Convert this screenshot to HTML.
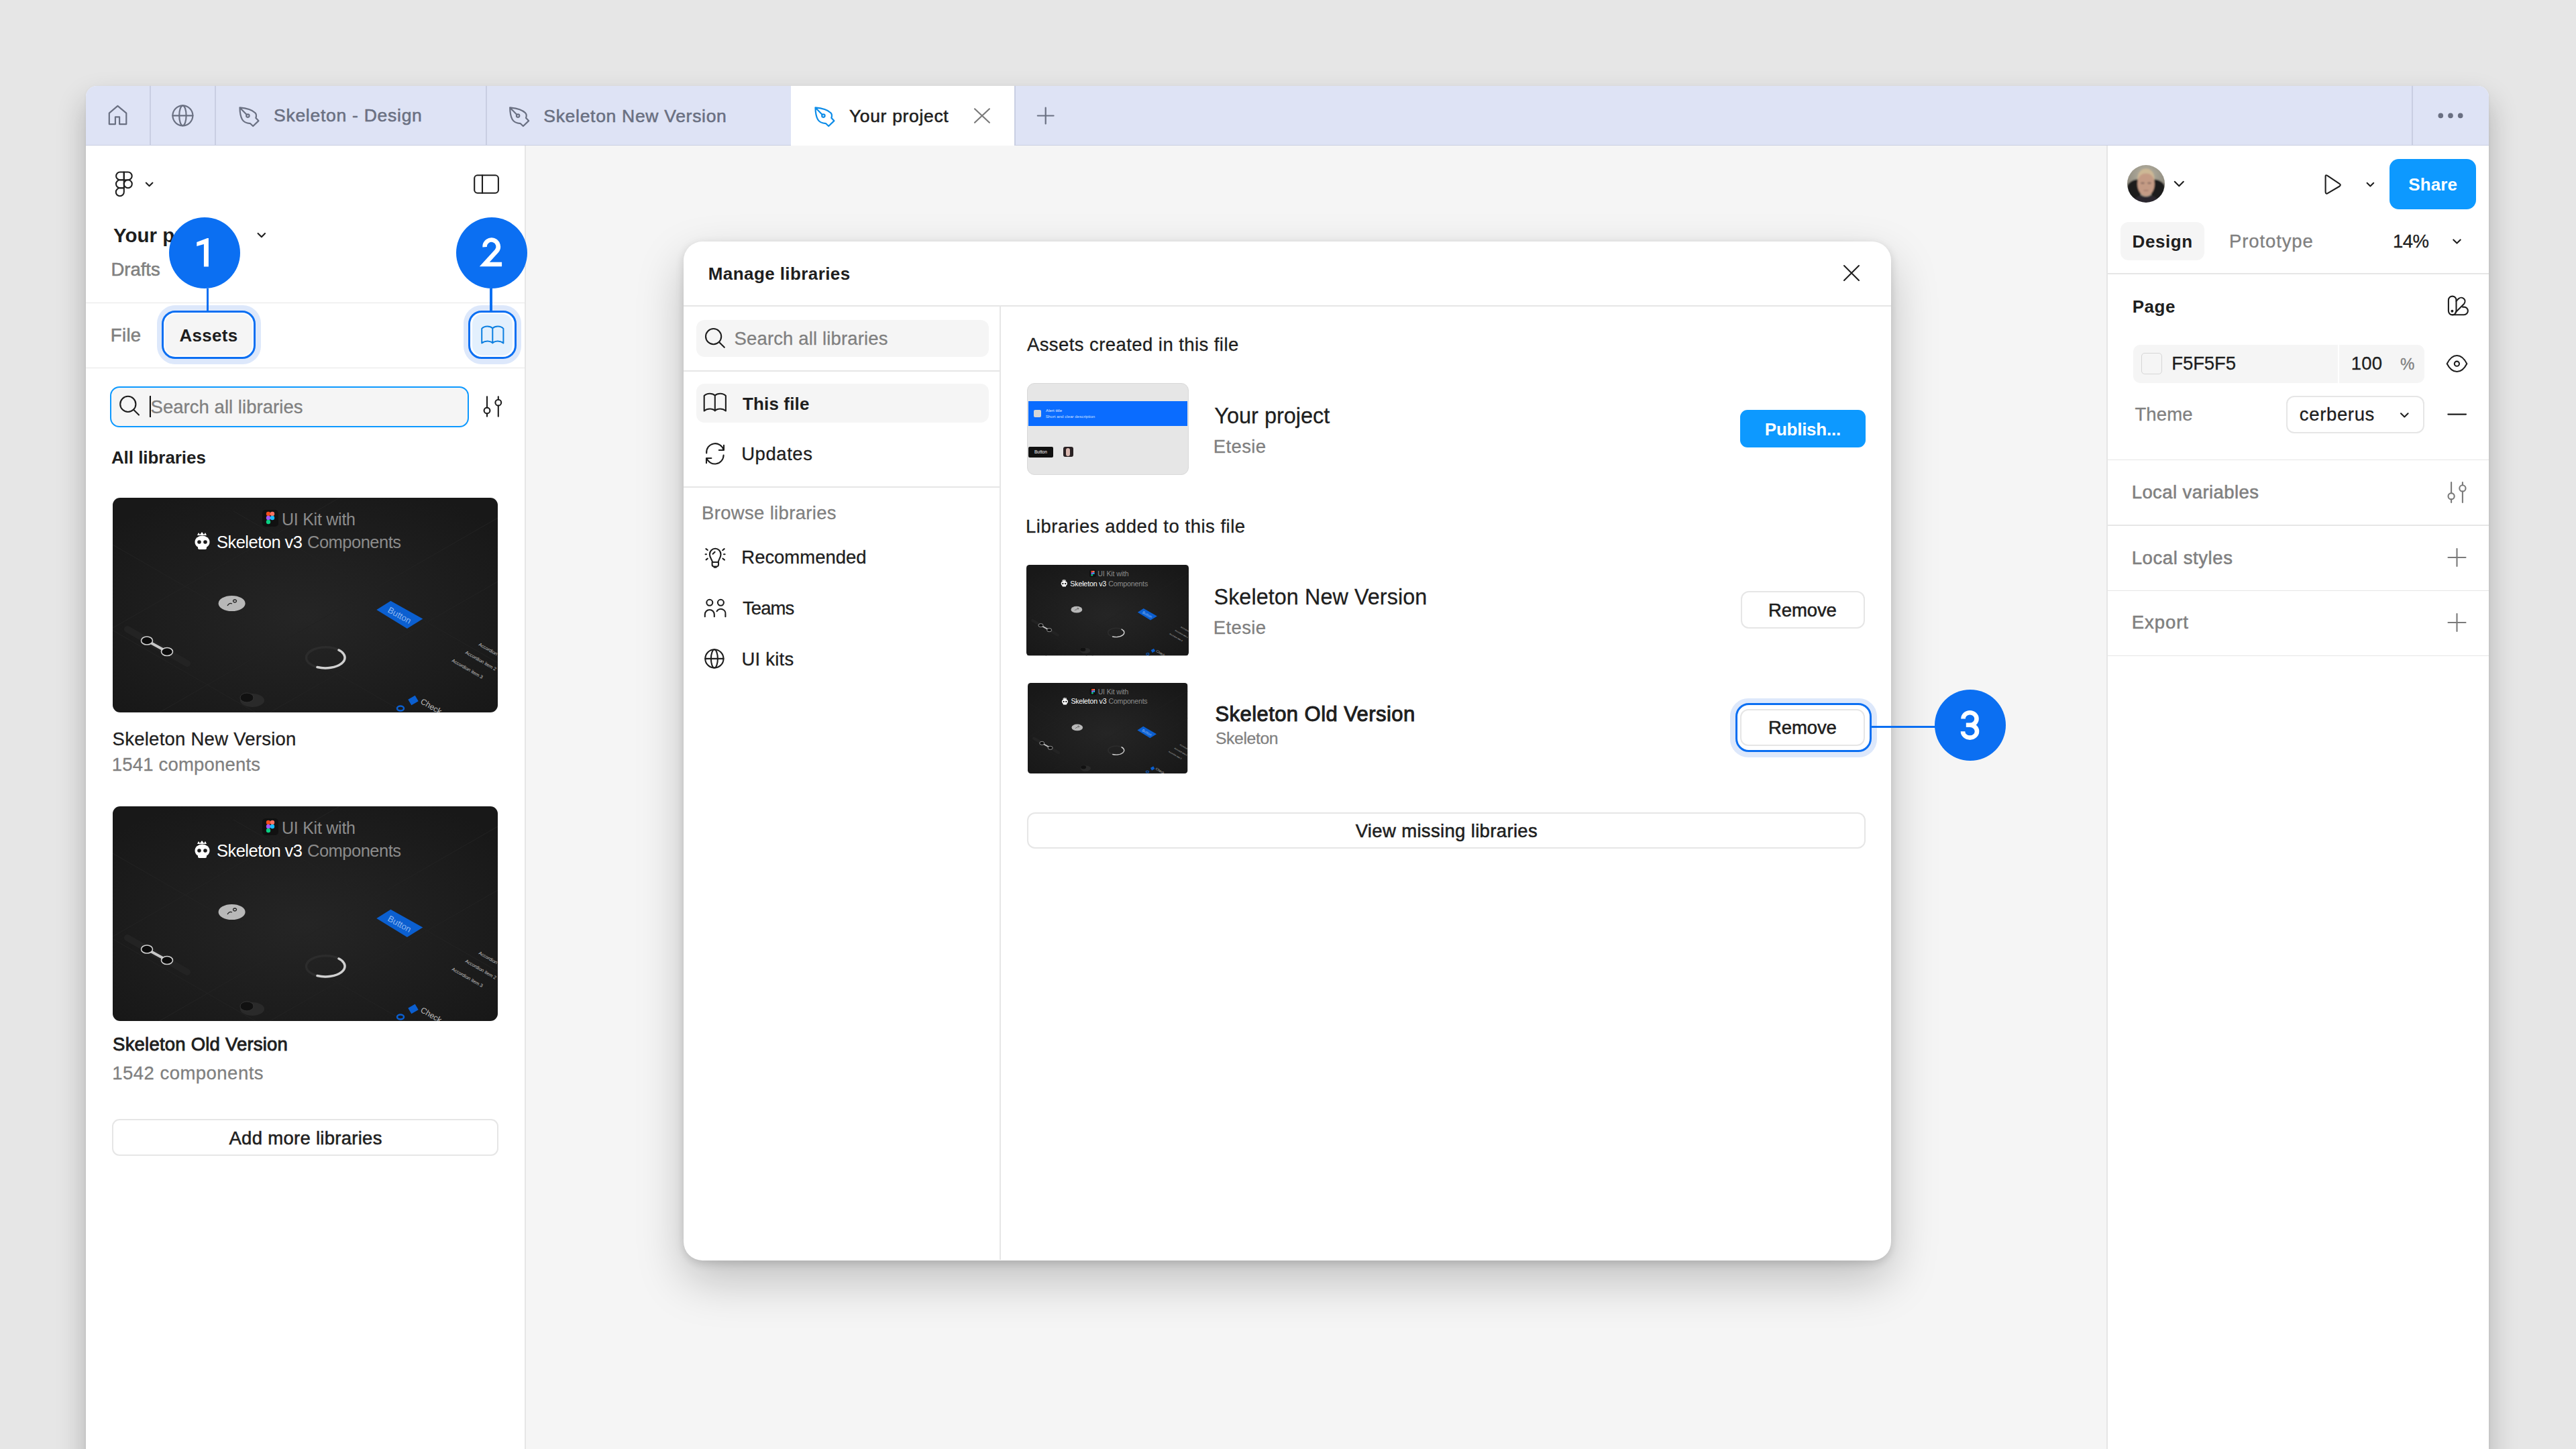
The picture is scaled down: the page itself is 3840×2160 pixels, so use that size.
<!DOCTYPE html>
<html><head><meta charset="utf-8"><style>
html,body{margin:0;padding:0;}
body{width:3840px;height:2160px;overflow:hidden;position:relative;background:#e6e6e6;font-family:"Liberation Sans",sans-serif;}
.t{position:absolute;white-space:nowrap;line-height:0;}
svg{position:absolute;overflow:visible;}
</style></head><body>

<div style="position:absolute;left:128px;top:128px;width:3582px;height:2100px;border-radius:16px;background:#fff;box-shadow:0 22px 44px rgba(0,0,0,0.24), 0 1px 4px rgba(0,0,0,0.06);overflow:hidden">
</div>
<div style="position:absolute;left:128.0px;top:128.0px;width:3582.0px;height:89.0px;background:#dee3f5;border-radius:16px 16px 0 0;"></div>
<div style="position:absolute;left:128.0px;top:216.0px;width:3582.0px;height:1.0px;background:#c9cee2;"></div>
<div style="position:absolute;left:223.0px;top:128.0px;width:1.5px;height:89.0px;background:#c9cee2;"></div>
<div style="position:absolute;left:320.0px;top:128.0px;width:1.5px;height:89.0px;background:#c9cee2;"></div>
<div style="position:absolute;left:724.0px;top:128.0px;width:1.5px;height:89.0px;background:#c9cee2;"></div>
<div style="position:absolute;left:3595.0px;top:128.0px;width:1.5px;height:89.0px;background:#c9cee2;"></div>
<div style="position:absolute;left:1179.0px;top:128.0px;width:333.0px;height:89.0px;background:#ffffff;"></div>
<div style="position:absolute;left:1512.0px;top:128.0px;width:1.5px;height:89.0px;background:#c9cee2;"></div>
<div style="position:absolute;left:783.0px;top:217.0px;width:2358.0px;height:1943.0px;background:#f5f5f5;"></div>
<div style="position:absolute;left:782.0px;top:217.0px;width:1.5px;height:1943.0px;background:#e6e6e6;"></div>
<div style="position:absolute;left:3140.0px;top:217.0px;width:1.5px;height:1943.0px;background:#e6e6e6;"></div>
<div class="t" style="left:408.0px;top:172.4px;font-size:26.50px;font-weight:400;color:#6a7082;letter-spacing:0.73px;-webkit-text-stroke:0.55px #6a7082;">Skeleton - Design</div>
<div class="t" style="left:810.3px;top:172.6px;font-size:26.50px;font-weight:400;color:#6a7082;letter-spacing:0.70px;-webkit-text-stroke:0.55px #6a7082;">Skeleton New Version</div>
<div class="t" style="left:1265.9px;top:172.6px;font-size:26.50px;font-weight:400;color:#1e1e1e;letter-spacing:0.67px;-webkit-text-stroke:0.55px #1e1e1e;">Your project</div>
<div class="t" style="left:169.0px;top:350.8px;font-size:29.50px;font-weight:700;color:#1e1e1e;letter-spacing:0.00px;">Your project</div>
<div class="t" style="left:165.4px;top:402.2px;font-size:27.50px;font-weight:400;color:#808080;letter-spacing:0.00px;-webkit-text-stroke:0.55px #808080;">Drafts</div>
<div style="position:absolute;left:128.0px;top:450.5px;width:654.0px;height:1.5px;background:#e6e6e6;"></div>
<div class="t" style="left:164.7px;top:499.5px;font-size:27.50px;font-weight:400;color:#808080;letter-spacing:0.39px;-webkit-text-stroke:0.55px #808080;">File</div>
<div style="position:absolute;left:233.5px;top:455.0px;width:155.0px;height:88.0px;background:#dde8fb;border-radius:27px;"></div>
<div style="position:absolute;left:240.6px;top:462.6px;width:140.4px;height:72.4px;background:#fff;border:3.4px solid #0b6ff2;border-radius:20px;box-sizing:border-box;"></div>
<div style="position:absolute;left:245.5px;top:467.5px;width:130.5px;height:62.5px;background:#f5f5f5;border-radius:15px;"></div>
<div class="t" style="left:267.4px;top:500.0px;font-size:26.00px;font-weight:700;color:#1e1e1e;letter-spacing:0.29px;">Assets</div>
<div style="position:absolute;left:691.0px;top:455.0px;width:85.5px;height:88.0px;background:#dde8fb;border-radius:27px;"></div>
<div style="position:absolute;left:698.0px;top:462.6px;width:71.5px;height:72.9px;background:#fff;border:3.4px solid #0b6ff2;border-radius:20px;box-sizing:border-box;"></div>
<div style="position:absolute;left:703.5px;top:468.0px;width:60.5px;height:62.0px;background:#e3f0fd;border-radius:15px;"></div>
<div style="position:absolute;left:128.0px;top:547.5px;width:654.0px;height:1.5px;background:#e6e6e6;"></div>
<div style="position:absolute;left:164.0px;top:575.7px;width:534.5px;height:60.9px;background:#f5f5f5;border:2.5px solid #0d99ff;border-radius:14px;box-sizing:border-box;"></div>
<div class="t" style="left:224.5px;top:606.5px;font-size:27.50px;font-weight:400;color:#808080;letter-spacing:0.04px;-webkit-text-stroke:0.3px #808080;">Search all libraries</div>
<div style="position:absolute;left:222.6px;top:590.0px;width:2.4px;height:32.0px;background:#1e1e1e;"></div>
<div class="t" style="left:165.9px;top:681.6px;font-size:26.00px;font-weight:700;color:#1e1e1e;letter-spacing:-0.05px;">All libraries</div>
<svg style="left:168px;top:742px" width="574" height="320" viewBox="0 0 574 320"><use href="#thumb"/></svg>
<div class="t" style="left:167.6px;top:1101.5px;font-size:27.50px;font-weight:400;color:#1e1e1e;letter-spacing:0.25px;-webkit-text-stroke:0.3px #1e1e1e;">Skeleton New Version</div>
<div class="t" style="left:166.7px;top:1139.5px;font-size:27.50px;font-weight:400;color:#808080;letter-spacing:0.19px;-webkit-text-stroke:0.3px #808080;">1541 components</div>
<svg style="left:168px;top:1202px" width="574" height="320" viewBox="0 0 574 320"><use href="#thumb"/></svg>
<div class="t" style="left:168.1px;top:1556.5px;font-size:27.50px;font-weight:400;color:#1e1e1e;letter-spacing:0.21px;-webkit-text-stroke:0.3px #1e1e1e;-webkit-text-stroke:0.9px #1e1e1e;">Skeleton Old Version</div>
<div class="t" style="left:167.2px;top:1599.5px;font-size:27.50px;font-weight:400;color:#808080;letter-spacing:0.48px;-webkit-text-stroke:0.3px #808080;">1542 components</div>
<div style="position:absolute;left:166.6px;top:1668.0px;width:576.4px;height:55.0px;border:2px solid #e6e6e6;border-radius:11px;box-sizing:border-box;"></div>
<div class="t" style="left:341.5px;top:1696.5px;font-size:27.50px;font-weight:400;color:#1e1e1e;letter-spacing:0.28px;-webkit-text-stroke:0.55px #1e1e1e;">Add more libraries</div>
<svg style="left:3170.8px;top:246.4px" width="56" height="56" viewBox="0 0 56 56"><defs><filter id="avblur" x="-10%" y="-10%" width="120%" height="120%"><feGaussianBlur stdDeviation="1"/></filter><clipPath id="avc"><circle cx="28" cy="28" r="28"/></clipPath><radialGradient id="avbg" cx="50%" cy="30%" r="70%"><stop offset="0" stop-color="#b8b3a3"/><stop offset="1" stop-color="#7d7a70"/></radialGradient></defs>
<g clip-path="url(#avc)"><g filter="url(#avblur)"><rect x="-4" y="-4" width="64" height="64" fill="url(#avbg)"/>
<path d="M0 31 C3 25 9 21 20 21 L20 48 L36 48 L36 21 C47 21 53 25 56 31 V56 H0 Z" fill="#1b1b1d"/>
<ellipse cx="28" cy="28" rx="12.8" ry="18.5" fill="#c49b85"/>
<path d="M15.2 24 C14.5 12 20.5 5.5 28 5.5 C35.5 5.5 41.5 12 40.8 24 C38.5 15.5 34 12.5 28 12.5 C22 12.5 17.5 15.5 15.2 24 Z" fill="#cdb895"/>
<ellipse cx="23" cy="27" rx="3" ry="1.4" fill="#6e5550" opacity="0.55"/><ellipse cx="33" cy="27" rx="3" ry="1.4" fill="#6e5550" opacity="0.55"/>
<ellipse cx="28" cy="38" rx="4" ry="1.3" fill="#9a6f62" opacity="0.5"/>
<path d="M6 60 C9 49 16 46 21 45 C24 48 32 48 35 45 C40 46 47 49 50 60 Z" fill="#2a282d"/>
</g></g></svg>
<div style="position:absolute;left:3562.0px;top:237.0px;width:129.0px;height:75.0px;background:#0d99ff;border-radius:14px;"></div>
<div class="t" style="left:3590.2px;top:275.2px;font-size:26.00px;font-weight:700;color:#ffffff;letter-spacing:0.12px;">Share</div>
<div style="position:absolute;left:3161.0px;top:331.0px;width:125.0px;height:57.0px;background:#f5f5f5;border-radius:12px;"></div>
<div class="t" style="left:3178.6px;top:360.0px;font-size:26.00px;font-weight:700;color:#1e1e1e;letter-spacing:0.55px;">Design</div>
<div class="t" style="left:3323.1px;top:359.5px;font-size:27.50px;font-weight:400;color:#808080;letter-spacing:0.88px;-webkit-text-stroke:0.3px #808080;">Prototype</div>
<div class="t" style="left:3566.9px;top:359.5px;font-size:27.50px;font-weight:400;color:#1e1e1e;letter-spacing:-0.48px;-webkit-text-stroke:0.3px #1e1e1e;">14%</div>
<div style="position:absolute;left:3141.0px;top:407.0px;width:569.0px;height:1.5px;background:#e6e6e6;"></div>
<div class="t" style="left:3178.7px;top:457.4px;font-size:26.00px;font-weight:700;color:#1e1e1e;letter-spacing:0.53px;">Page</div>
<div style="position:absolute;left:3180.0px;top:513.8px;width:434.4px;height:56.8px;background:#f5f5f5;border-radius:10px;"></div>
<div style="position:absolute;left:3485.0px;top:513.8px;width:2.0px;height:56.8px;background:#ffffff;"></div>
<div style="position:absolute;left:3191.8px;top:526.0px;width:31.2px;height:32.0px;background:#f5f5f5;border:1.5px solid #d6d6d6;border-radius:5px;box-sizing:border-box;"></div>
<div class="t" style="left:3237.2px;top:541.5px;font-size:27.50px;font-weight:400;color:#1e1e1e;letter-spacing:-0.07px;-webkit-text-stroke:0.3px #1e1e1e;">F5F5F5</div>
<div class="t" style="left:3504.7px;top:541.5px;font-size:27.50px;font-weight:400;color:#1e1e1e;letter-spacing:0.24px;-webkit-text-stroke:0.3px #1e1e1e;">100</div>
<div class="t" style="left:3578.1px;top:542.7px;font-size:24.00px;font-weight:400;color:#808080;letter-spacing:0.00px;-webkit-text-stroke:0.3px #808080;">%</div>
<div class="t" style="left:3182.4px;top:617.9px;font-size:27.50px;font-weight:400;color:#808080;letter-spacing:0.16px;-webkit-text-stroke:0.3px #808080;">Theme</div>
<div style="position:absolute;left:3407.6px;top:590.0px;width:206.1px;height:55.5px;border:2px solid #e6e6e6;border-radius:12px;box-sizing:border-box;"></div>
<div class="t" style="left:3427.8px;top:617.5px;font-size:27.50px;font-weight:400;color:#1e1e1e;letter-spacing:0.65px;-webkit-text-stroke:0.3px #1e1e1e;">cerberus</div>
<div style="position:absolute;left:3141.0px;top:684.5px;width:569.0px;height:1.5px;background:#e6e6e6;"></div>
<div class="t" style="left:3177.7px;top:734.2px;font-size:27.50px;font-weight:400;color:#808080;letter-spacing:0.42px;-webkit-text-stroke:0.55px #808080;">Local variables</div>
<div style="position:absolute;left:3141.0px;top:782.0px;width:569.0px;height:1.5px;background:#e6e6e6;"></div>
<div class="t" style="left:3177.7px;top:831.5px;font-size:27.50px;font-weight:400;color:#808080;letter-spacing:0.60px;-webkit-text-stroke:0.55px #808080;">Local styles</div>
<div style="position:absolute;left:3141.0px;top:879.5px;width:569.0px;height:1.5px;background:#e6e6e6;"></div>
<div class="t" style="left:3177.7px;top:928.2px;font-size:27.50px;font-weight:400;color:#808080;letter-spacing:0.94px;-webkit-text-stroke:0.55px #808080;">Export</div>
<div style="position:absolute;left:3141.0px;top:976.5px;width:569.0px;height:1.5px;background:#e6e6e6;"></div>
<svg style="left:0;top:0" width="3840" height="2160" viewBox="0 0 3840 2160" fill="none" stroke-linecap="round" stroke-linejoin="round">
<g stroke="#6a7082" stroke-width="2.2">
<path d="M162.8 185.1 V168.6 L175.4 157.8 L188.3 168.6 V185.1 H178.1 V174.3 H171.9 V185.1 Z"/>
<circle cx="272.4" cy="172.3" r="15"/>
<ellipse cx="272.4" cy="172.3" rx="5.2" ry="15"/>
<path d="M257.4 172.3 H287.4"/>
<path d="M357.5 160.4 C367.0 161.2 376.0 164.0 380.4 168.2 C382.5 170.5 382.0 174.0 381.3 175.8 L385.4 180.1 L377.2 188.0 L373.2 184.2 C368.0 183.8 363.0 181.5 361.0 178.0 C358.8 174.0 357.6 167.0 357.5 160.4 Z M357.5 160.4 L367.8 171.0"/>
<circle cx="369.4" cy="172.6" r="2.2"/>
<path d="M760.2 160.4 C769.7 161.2 778.7 164.0 783.1 168.2 C785.2 170.5 784.7 174.0 784.0 175.8 L788.1 180.1 L779.9 188.0 L775.9 184.2 C770.7 183.8 765.7 181.5 763.7 178.0 C761.5 174.0 760.3 167.0 760.2 160.4 Z M760.2 160.4 L770.5 171.0"/>
<circle cx="772.1" cy="172.6" r="2.2"/>
<path d="M1546.8 172.5 H1570.6 M1558.7 160.6 V184.5"/>
</g>
<g stroke="#0d8ce8" stroke-width="2.2">
<path d="M1215.5 160.4 C1225.0 161.2 1234.0 164.0 1238.4 168.2 C1240.5 170.5 1240.0 174.0 1239.3 175.8 L1243.4 180.1 L1235.2 188.0 L1231.2 184.2 C1226.0 183.8 1221.0 181.5 1219.0 178.0 C1216.8 174.0 1215.6 167.0 1215.5 160.4 Z M1215.5 160.4 L1225.8 171.0"/>
<circle cx="1227.4" cy="172.6" r="2.2"/>
</g>
<path d="M1453 162.3 L1474.9 182.7 M1474.9 162.3 L1453 182.7" stroke="#7a7a7a" stroke-width="2.2"/>
<g fill="#6a7082"><circle cx="3638.3" cy="172.4" r="3.8"/><circle cx="3653" cy="172.4" r="3.8"/><circle cx="3667.7" cy="172.4" r="3.8"/></g>
<g stroke="#1e1e1e" stroke-width="2.1">
<path d="M184.8 256.5 H179 A5.9 5.9 0 0 0 179 268.3 H184.8 Z"/>
<path d="M184.8 256.5 H190.8 A5.9 5.9 0 0 1 190.8 268.3 H184.8 Z"/>
<path d="M184.8 268.3 H179 A6 6 0 0 0 179 280.3 H184.8 Z"/>
<circle cx="190.8" cy="274.3" r="6"/>
<path d="M184.8 280.3 H179 A6 6 0 1 0 184.8 286.3 Z"/>
<path d="M217.8 272.6 L222.6 277.2 L227.4 272.6"/>
<rect x="707.2" y="261.3" width="35.7" height="26.4" rx="4.5"/>
<path d="M719 261.3 V287.7"/>
<path d="M384.6 347.9 L389.9 353.2 L395 347.9"/>
<circle cx="190.8" cy="602.4" r="11.6"/>
<path d="M199.4 611 L207 618.6"/>
<path d="M726 591.3 V607.6 M726 616.4 V620.8 M742.8 591.3 V595.8 M742.8 604.6 V620.8"/>
<circle cx="726" cy="612" r="4.4"/>
<circle cx="742.8" cy="600.2" r="4.4"/>
<path d="M3241.8 270.8 L3248.3 277.3 L3254.8 270.8"/>
<path d="M3466.6 262.5 V285.8 Q3466.6 290 3470.2 287.9 L3487 278 Q3490.6 275.8 3487 273.6 L3470.2 262.3 Q3466.6 260.2 3466.6 262.5 Z"/>
<path d="M3528.6 272.8 L3533.4 277.4 L3538.2 272.8"/>
<path d="M3657.3 357.4 L3662.5 362.6 L3667.7 357.4"/>
<path d="M3579 616.3 L3584.3 621.4 L3589.6 616.3"/>
<path d="M3649.3 617.6 H3676"/>
<path d="M3647.7 542.2 C3656 526 3669 526 3677.3 542.2 C3669 558 3656 558 3647.7 542.2 Z"/>
<circle cx="3662.4" cy="542.2" r="3.6"/>
<rect x="3649.9" y="441.6" width="11.6" height="27.8" rx="5.8"/>
<path d="M3661.5 448.8 L3665.2 445.1 A5.6 5.6 0 0 1 3673.1 453 L3660.5 465.6"/>
<path d="M3671 457.6 H3673 A5.8 5.8 0 0 1 3673 469.3 H3656"/>
</g>
<circle cx="3655.4" cy="463.7" r="2" fill="#1e1e1e"/>
<g stroke="#7a7a7a" stroke-width="2.1">
<path d="M3654.1 719 V735.1 M3654.1 744.3 V749 M3670.9 719 V723.3 M3670.9 732.5 V749"/>
<circle cx="3654.1" cy="739.7" r="4.6"/>
<circle cx="3670.9" cy="727.9" r="4.6"/>
<path d="M3649.5 831 H3675.5 M3662.5 818 V844"/>
<path d="M3649.5 928 H3675.5 M3662.5 915 V941"/>
</g>
<g stroke="#0d7fe0" stroke-width="2">
<path d="M734.3 489.3 C731 486 722.5 485 718.2 489.8 V511.6 C722.5 507.5 731 507.5 734.3 511.4 C737.6 507.5 746.1 507.5 750.4 511.6 V489.8 C746.1 485 737.6 486 734.3 489.3 Z M734.3 489.3 V511.4"/>
</g>
<rect x="222.9" y="591" width="2.1" height="30.4" fill="#111"/>
</svg>
<div style="position:absolute;left:1019px;top:360px;width:1800px;height:1518.5px;border-radius:28px;background:#fff;box-shadow:0 30px 70px rgba(0,0,0,0.22), 0 4px 14px rgba(0,0,0,0.14);"></div>
<div class="t" style="left:1055.8px;top:407.6px;font-size:26.00px;font-weight:700;color:#1e1e1e;letter-spacing:0.41px;">Manage libraries</div>
<div style="position:absolute;left:1019.0px;top:455.0px;width:1800.0px;height:1.5px;background:#e6e6e6;"></div>
<div style="position:absolute;left:1490.0px;top:456.0px;width:1.5px;height:1422.0px;background:#e6e6e6;"></div>
<div style="position:absolute;left:1038.0px;top:476.7px;width:436.0px;height:55.1px;background:#f5f5f5;border-radius:12px;"></div>
<div class="t" style="left:1094.5px;top:504.8px;font-size:27.50px;font-weight:400;color:#808080;letter-spacing:0.15px;-webkit-text-stroke:0.3px #808080;">Search all libraries</div>
<div style="position:absolute;left:1019.0px;top:552.0px;width:471.0px;height:1.5px;background:#e6e6e6;"></div>
<div style="position:absolute;left:1038.0px;top:572.0px;width:436.0px;height:58.0px;background:#f5f5f5;border-radius:12px;"></div>
<div class="t" style="left:1107.0px;top:602.0px;font-size:26.00px;font-weight:700;color:#1e1e1e;letter-spacing:0.14px;">This file</div>
<div class="t" style="left:1105.2px;top:677.1px;font-size:27.50px;font-weight:400;color:#1e1e1e;letter-spacing:0.56px;-webkit-text-stroke:0.3px #1e1e1e;">Updates</div>
<div style="position:absolute;left:1019.0px;top:725.0px;width:471.0px;height:1.5px;background:#e6e6e6;"></div>
<div class="t" style="left:1046.0px;top:764.5px;font-size:27.50px;font-weight:400;color:#808080;letter-spacing:0.33px;-webkit-text-stroke:0.3px #808080;">Browse libraries</div>
<div class="t" style="left:1105.3px;top:831.3px;font-size:27.50px;font-weight:400;color:#1e1e1e;letter-spacing:-0.03px;-webkit-text-stroke:0.3px #1e1e1e;">Recommended</div>
<div class="t" style="left:1107.0px;top:907.2px;font-size:27.50px;font-weight:400;color:#1e1e1e;letter-spacing:-0.93px;-webkit-text-stroke:0.3px #1e1e1e;">Teams</div>
<div class="t" style="left:1105.5px;top:982.5px;font-size:27.50px;font-weight:400;color:#1e1e1e;letter-spacing:0.22px;-webkit-text-stroke:0.3px #1e1e1e;">UI kits</div>
<div class="t" style="left:1530.9px;top:514.0px;font-size:27.50px;font-weight:400;color:#1e1e1e;letter-spacing:0.43px;-webkit-text-stroke:0.3px #1e1e1e;">Assets created in this file</div>
<div style="position:absolute;left:1530.7px;top:571.0px;width:241.0px;height:136.8px;background:#e6e6e6;border:1.5px solid #d9d9d9;border-radius:11px;box-sizing:border-box;"></div>
<div style="position:absolute;left:1533.0px;top:597.7px;width:237.0px;height:37.0px;background:#0a6cff;"></div>
<div style="position:absolute;left:1540.5px;top:611.0px;width:11.0px;height:11.0px;background:#d6d6d6;border-radius:2px;"></div>
<div class="t" style="left:1559.0px;top:611.9px;font-size:6.20px;font-weight:400;color:#e8f0ff;letter-spacing:0.00px;">Alert title</div>
<div class="t" style="left:1558.7px;top:620.9px;font-size:6.20px;font-weight:400;color:#cfe0ff;letter-spacing:0.00px;">Short and clear description</div>
<div style="position:absolute;left:1533.0px;top:665.5px;width:37.0px;height:16.0px;background:#111;border-radius:2px;"></div>
<div class="t" style="left:1542.0px;top:673.7px;font-size:6.50px;font-weight:400;color:#fff;letter-spacing:0.00px;">Button</div>
<div style="position:absolute;left:1584.5px;top:665.5px;width:15.0px;height:15.5px;background:#2a2224;border-radius:3px;"></div>
<div style="position:absolute;left:1589.0px;top:668.0px;width:6.0px;height:12.0px;background:#d9b8b0;border-radius:3px;"></div>
<div class="t" style="left:1810.3px;top:619.7px;font-size:32.50px;font-weight:400;color:#1e1e1e;letter-spacing:-0.02px;-webkit-text-stroke:0.3px #1e1e1e;">Your project</div>
<div class="t" style="left:1808.7px;top:665.5px;font-size:27.50px;font-weight:400;color:#808080;letter-spacing:0.39px;-webkit-text-stroke:0.3px #808080;">Etesie</div>
<div style="position:absolute;left:2593.8px;top:610.5px;width:187.2px;height:56.8px;background:#0d99ff;border-radius:11px;"></div>
<div class="t" style="left:2630.8px;top:639.5px;font-size:26.00px;font-weight:700;color:#ffffff;letter-spacing:-0.25px;">Publish...</div>
<div class="t" style="left:1529.0px;top:784.5px;font-size:27.50px;font-weight:400;color:#1e1e1e;letter-spacing:0.51px;-webkit-text-stroke:0.3px #1e1e1e;">Libraries added to this file</div>
<svg style="left:1530px;top:842px" width="242" height="135.5" viewBox="0 0 574 320" preserveAspectRatio="none"><use href="#thumb"/></svg>
<div class="t" style="left:1809.5px;top:889.8px;font-size:32.30px;font-weight:400;color:#1e1e1e;letter-spacing:0.09px;-webkit-text-stroke:0.3px #1e1e1e;">Skeleton New Version</div>
<div class="t" style="left:1808.7px;top:935.5px;font-size:27.50px;font-weight:400;color:#808080;letter-spacing:0.39px;-webkit-text-stroke:0.3px #808080;">Etesie</div>
<div style="position:absolute;left:2594.8px;top:881.3px;width:185.2px;height:55.7px;border:2px solid #e6e6e6;border-radius:12px;box-sizing:border-box;"></div>
<div class="t" style="left:2636.1px;top:909.5px;font-size:27.50px;font-weight:400;color:#1e1e1e;letter-spacing:-0.12px;-webkit-text-stroke:0.55px #1e1e1e;">Remove</div>
<svg style="left:1532px;top:1017.5px" width="238.5" height="135" viewBox="0 0 574 320" preserveAspectRatio="none"><use href="#thumb"/></svg>
<div class="t" style="left:1811.4px;top:1064.9px;font-size:31.00px;font-weight:400;color:#1e1e1e;letter-spacing:0.44px;-webkit-text-stroke:0.3px #1e1e1e;-webkit-text-stroke:1px #1e1e1e;">Skeleton Old Version</div>
<div class="t" style="left:1811.9px;top:1101.4px;font-size:24.70px;font-weight:400;color:#808080;letter-spacing:-0.34px;-webkit-text-stroke:0.3px #808080;">Skeleton</div>
<div style="position:absolute;left:2579.0px;top:1040.5px;width:218.5px;height:88.5px;background:#dde8fb;border-radius:27px;"></div>
<div style="position:absolute;left:2586.5px;top:1048.0px;width:203.5px;height:73.0px;background:#fff;border:3.4px solid #0b6ff2;border-radius:20px;box-sizing:border-box;"></div>
<div style="position:absolute;left:2594.0px;top:1056.6px;width:186.0px;height:55.4px;border:2px solid #e6e6e6;border-radius:12px;box-sizing:border-box;"></div>
<div class="t" style="left:2636.1px;top:1084.5px;font-size:27.50px;font-weight:400;color:#1e1e1e;letter-spacing:-0.12px;-webkit-text-stroke:0.55px #1e1e1e;">Remove</div>
<div style="position:absolute;left:1531.0px;top:1210.6px;width:1250.0px;height:54.9px;border:2px solid #e6e6e6;border-radius:12px;box-sizing:border-box;"></div>
<div class="t" style="left:2020.7px;top:1238.5px;font-size:27.50px;font-weight:400;color:#1e1e1e;letter-spacing:0.34px;-webkit-text-stroke:0.55px #1e1e1e;">View missing libraries</div>
<svg style="left:0;top:0" width="3840" height="2160" viewBox="0 0 3840 2160" fill="none" stroke-linecap="round" stroke-linejoin="round">
<g stroke="#1e1e1e" stroke-width="2.1">
<path d="M2749 396 L2771 418 M2771 396 L2749 418"/>
<circle cx="1063.6" cy="501.6" r="11.6"/>
<path d="M1072.2 510.2 L1079.8 517.8"/>
<path d="M1065.8 589.5 C1062.5 586.2 1054 585.2 1049.7 590 V612.6 C1054 608.5 1062.5 608.5 1065.8 612.4 C1069.1 608.5 1077.6 608.5 1081.9 612.6 V590 C1077.6 585.2 1069.1 586.2 1065.8 589.5 Z M1065.8 589.5 V612.4"/>
<path d="M1053.2 675.5 A13 13 0 0 1 1078.6 670.5 M1079 663.8 V671 H1071.8"/>
<path d="M1078.6 678.5 A13 13 0 0 1 1053.4 683 M1053 690.2 V683 H1060.4"/>
<path d="M1062.3 838 C1060.5 833 1057.9 830.5 1057.9 826.4 A8.3 8.6 0 0 1 1074.5 826.4 C1074.5 830.5 1072 833 1070.5 838 Z"/>
<path d="M1061.6 838 V841.8 A2.7 2.7 0 0 0 1064.3 844.5 H1068.3 A2.7 2.7 0 0 0 1071 841.8 V838 M1064.6 845.8 H1067.6"/>
<path d="M1062.6 825.8 L1065.6 822.8"/>
<path d="M1051.6 826.2 H1053 M1052.4 818.1 L1054.8 820 M1052.6 834.4 L1054.8 832.7 M1079 826.2 H1080.6 M1079.7 818.1 L1077.2 820.2 M1080 834.6 L1077.4 832.6"/>
<circle cx="1057.8" cy="898.3" r="4.5"/>
<circle cx="1074.4" cy="898.3" r="4.5"/>
<path d="M1050.8 919.2 V916 A7 7 0 0 1 1064.8 916 V919.2"/>
<path d="M1068.5 911.2 A7 7 0 0 1 1081.4 916 V919.2"/>
<circle cx="1064.9" cy="981.9" r="13.6"/>
<ellipse cx="1064.9" cy="981.9" rx="5" ry="13.6"/>
<path d="M1051.3 981.9 H1078.5"/>
</g>
</svg>
<div style="position:absolute;left:307.5px;top:430.0px;width:3.5px;height:33.0px;background:#0b6ff2;"></div>
<div style="position:absolute;left:730.0px;top:430.0px;width:3.5px;height:33.0px;background:#0b6ff2;"></div>
<div style="position:absolute;left:2790.0px;top:1081.8px;width:96.0px;height:3.6px;background:#0b6ff2;"></div>
<div style="position:absolute;left:252.4px;top:324.0px;width:106px;height:106px;border-radius:50%;background:#0b6ff2;"></div>
<div style="position:absolute;left:680.4px;top:324.0px;width:106px;height:106px;border-radius:50%;background:#0b6ff2;"></div>
<div style="position:absolute;left:2884.0px;top:1028.0px;width:106px;height:106px;border-radius:50%;background:#0b6ff2;"></div>
<svg style="left:0;top:0" width="3840" height="2160" viewBox="0 0 3840 2160">
<path d="M310.9 355 V397.4 H303.9 V364 L293.3 366.9 V360.9 L309 355 Z" fill="#fff"/>
<path d="M722.6 368.2 A10.1 10.1 0 1 1 740.3 374.3 L722.3 394 H748.1" fill="none" stroke="#fff" stroke-width="6.6" stroke-linejoin="miter" stroke-miterlimit="10"/>
<path d="M2926.5 1071.5 A10 9.3 0 1 1 2936.5 1080.8 H2930.8 M2936.5 1080.8 A10.5 9.4 0 1 1 2926 1090.2" fill="none" stroke="#fff" stroke-width="6.6"/>
</svg>
<svg width="0" height="0" style="position:absolute;left:0;top:0">
<defs>
<radialGradient id="tbg" cx="50%" cy="55%" r="65%">
<stop offset="0" stop-color="#252525"/>
<stop offset="1" stop-color="#181818"/>
</radialGradient>
<clipPath id="tclip"><rect x="0" y="0" width="574" height="320" rx="11"/></clipPath>
<symbol id="thumb" viewBox="0 0 574 320">
<g clip-path="url(#tclip)">
<rect x="0" y="0" width="574" height="320" fill="url(#tbg)"/>
<g stroke="#232323" stroke-width="1" fill="none">
<path d="M0 70 L574 400"/>
<path d="M-100 140 L574 528"/>
<path d="M180 20 L574 246"/>
<path d="M0 360 L574 30"/>
<path d="M60 420 L574 125"/>
<path d="M-80 240 L420 -47"/>
</g>
<rect x="223" y="18" width="24" height="25" rx="5" fill="#111"/>
<circle cx="232" cy="24" r="3.2" fill="#f24e1e"/><circle cx="238" cy="24" r="3.2" fill="#ff7262"/>
<circle cx="232" cy="30" r="3.2" fill="#a259ff"/><circle cx="238" cy="30" r="3.2" fill="#1abcfe"/>
<circle cx="232" cy="36" r="3.2" fill="#0acf83"/>
<text x="252" y="41.2" font-family="Liberation Sans" font-size="25" fill="#8c8c8c" textLength="110">UI Kit with</text>
<g fill="#fff">
<ellipse cx="133.5" cy="66" rx="11" ry="9.5"/>
<rect x="127" y="70" width="13" height="7" rx="2"/>
<path d="M126 56 l2 -4 l2 3 l3 -4 l3 4 l2 -3 l2 4 z"/>
</g>
<g fill="#1b1b1b"><circle cx="129" cy="66" r="2.8"/><circle cx="138" cy="66" r="2.8"/></g>
<text x="155" y="74.6" font-family="Liberation Sans" font-size="25.5" fill="#ffffff" textLength="128">Skeleton v3</text>
<text x="290" y="74.6" font-family="Liberation Sans" font-size="25.5" fill="#8c8c8c" textLength="140">Components</text>
<ellipse cx="177.6" cy="157.5" rx="20" ry="11.6" fill="#b8b8b8"/>
<path d="M171 161 q3 -5 7 -3 M182 156 a2.5 2 0 1 1 0.1 0" stroke="#222" stroke-width="1.3" fill="none"/>
<path d="M22 196 L111 247" stroke="#232323" stroke-width="10" stroke-linecap="round"/>
<path d="M51 213 L81 229.5" stroke="#c8c8c8" stroke-width="4"/>
<ellipse cx="51" cy="213" rx="8.5" ry="6" fill="#0b0b0b" stroke="#cfcfcf" stroke-width="1.6"/>
<ellipse cx="81" cy="229.5" rx="8.5" ry="6" fill="#0b0b0b" stroke="#cfcfcf" stroke-width="1.6"/>
<polygon points="393.3,167.1 414.4,153.7 462.3,180.5 438.9,195" fill="#0b5fd0"/>
<text transform="translate(409 170) rotate(29.2)" font-family="Liberation Sans" font-size="13" fill="#8fb8f0">Button</text>
<ellipse cx="317.5" cy="238.4" rx="29" ry="15.6" fill="none" stroke="#2c2c2c" stroke-width="3.5"/>
<path d="M337 227 A29 15.6 0 0 1 305 252.5" fill="none" stroke="#d0d0d0" stroke-width="3.5" stroke-linecap="round"/>
<g font-family="Liberation Sans" font-size="7" fill="#c4c4c4">
<text transform="translate(545 220) rotate(30)">Accordion item 1</text>
<text transform="translate(525 232) rotate(30)">Accordion item 2</text>
<text transform="translate(505 244) rotate(30)">Accordion item 3</text>
</g>
<ellipse cx="208" cy="302" rx="18" ry="10" fill="#2a2a2a"/>
<ellipse cx="200" cy="298" rx="10" ry="7" fill="#111" stroke="#333" stroke-width="1"/>
<rect x="442" y="297" width="12" height="10" fill="#0b5fd0" transform="rotate(-30 448 302)"/>
<ellipse cx="429" cy="314" rx="5" ry="3.5" fill="none" stroke="#0b5fd0" stroke-width="2.5"/>
<text transform="translate(458 306) rotate(30)" font-family="Liberation Sans" font-size="12" fill="#bdbdbd">Check</text>
</g>
</symbol>
</defs>
</svg>

</body></html>
